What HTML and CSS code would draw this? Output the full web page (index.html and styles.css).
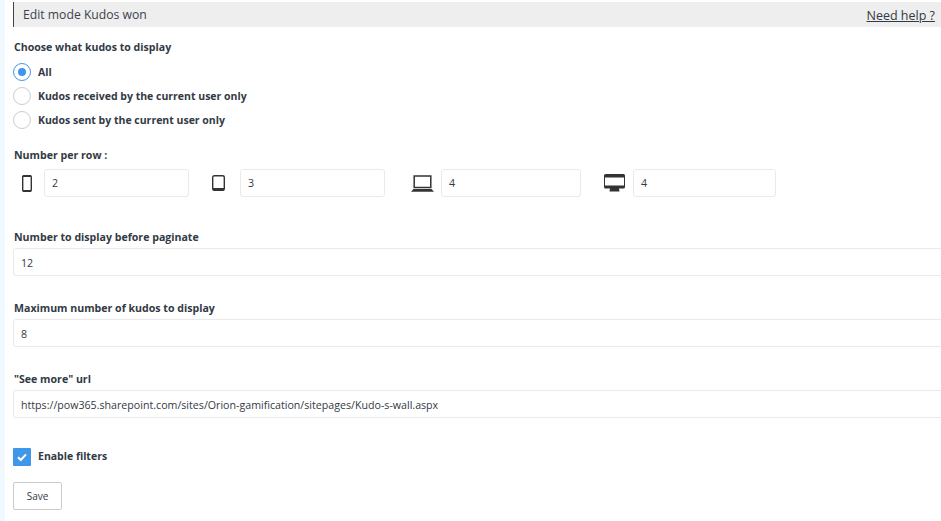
FILE: index.html
```html
<!DOCTYPE html>
<html lang="en">
<head>
<meta charset="utf-8">
<title>Edit mode Kudos won</title>
<link rel="stylesheet" href="styles.css">
</head>
<body>
<main class="panel">
  <header class="head">
    <span class="head-title">Edit mode Kudos won</span>
    <a class="help" href="#">Need help ?</a>
  </header>

  <div class="label first">Choose what kudos to display</div>
  <div class="radios">
    <div class="radio-row"><span class="radio on"></span><span class="opt">All</span></div>
    <div class="radio-row"><span class="radio"></span><span class="opt">Kudos received by the current user only</span></div>
    <div class="radio-row"><span class="radio"></span><span class="opt">Kudos sent by the current user only</span></div>
  </div>

  <div class="label per-row">Number per row :</div>
  <div class="devices">
    <span class="ico i1">
      <svg width="10" height="17" viewBox="0 0 10 17"><rect x=".7" y=".7" width="8.600" height="15.600" rx="1.200" fill="none" stroke="#333" stroke-width="1.400"/><path d="M1 0h8v2H1zM1 15h8v2H1z" fill="#333"/></svg>
    </span>
    <div class="field f1">2</div>
    <span class="ico i2">
      <svg width="13" height="16" viewBox="0 0 13 16"><rect x=".7" y=".7" width="11.600" height="14.600" rx="1.500" fill="none" stroke="#333" stroke-width="1.400"/><path d="M1 13h11v2.500H1z" fill="#333"/></svg>
    </span>
    <div class="field f2">3</div>
    <span class="ico i3">
      <svg width="23" height="17" viewBox="0 0 23 17"><rect x="3.200" y="1" width="16.600" height="11.500" fill="none" stroke="#333" stroke-width="1.500"/><path d="M2.500 14h18l2.500 2.800H0z" fill="#333"/></svg>
    </span>
    <div class="field f3">4</div>
    <span class="ico i4">
      <svg width="21" height="18" viewBox="0 0 21 18"><path d="M1.500 0h18A1.500 1.500 0 0 1 21 1.500v11.500a1.500 1.500 0 0 1-1.500 1.500H15l.5 3h-10l.5-3H1.500A1.500 1.500 0 0 1 0 13v-11.500A1.500 1.500 0 0 1 1.500 0zM1 3.500v8h19v-8z" fill="#333" fill-rule="evenodd"/></svg>
    </span>
    <div class="field f4">4</div>
  </div>

  <div class="label s1">Number to display before paginate</div>
  <div class="field wide">12</div>

  <div class="label s2">Maximum number of kudos to display</div>
  <div class="field wide">8</div>

  <div class="label s2">"See more" url</div>
  <div class="field wide">https://pow365.sharepoint.com/sites/Orion-gamification/sitepages/Kudo-s-wall.aspx</div>

  <div class="check-row">
    <span class="check">
      <svg width="18" height="18" viewBox="0 0 18 18"><path d="M5 9.300l2.800 2.700L13 6.300" fill="none" stroke="#fff" stroke-width="2"/></svg>
    </span>
    <span class="opt opt-check">Enable filters</span>
  </div>

  <button class="save" type="button">Save</button>
</main>
</body>
</html>
```
FILE: styles.css
```css
* { box-sizing: border-box; }
html, body { margin: 0; height: 100%; overflow: hidden; }
body {
  background: #fff;
  font-family: "Open Sans", "Noto Sans", sans-serif;
  color: #323a45;
  font-size: 11px;
  border-left: 5px solid #f0f9ff;
}
.panel { padding: 2px 0 0 8px; width: 936px; }
.head {
  height: 25px;
  background: #eee;
  border-left: 1px solid #444;
  display: flex;
  align-items: center;
  justify-content: space-between;
  padding: 0 6px 0 9px;
}
.head-title { font-size: 12.200px; color: #3b424d; }
.help { font-size: 12.500px; color: #323a45; text-decoration: underline; margin-top: 2px; }
.label { font-weight: 700; font-size: 10.600px; line-height: 14px; color: #323a45; padding-left: 1px; }
.first { margin-top: 13px; }
.radios { margin-top: 6px; }
.radio-row { display: flex; align-items: center; height: 24px; gap: 7px; }
.radio {
  width: 18px; height: 18px; border-radius: 50%;
  border: 1px solid #ccc; background: #fff;
  display: flex; align-items: center; justify-content: center;
}
.radio.on { border-color: #3f97e8; }
.radio.on::after { content: ""; width: 8px; height: 8px; border-radius: 50%; background: #3f97e8; }
.opt { font-weight: 700; font-size: 10.500px; color: #323a45; }
.opt-check { position: relative; top: -1px; }
.per-row { margin-top: 16px; }
.devices { display: flex; align-items: center; margin-top: 7px; }
.ico { flex: none; display: flex; justify-content: flex-end; align-items: center; }
.ico svg { display: block; }
.i1 { width: 31px; padding-right: 12px; }
.i2 { width: 51px; padding-right: 15px; }
.i3 { width: 56px; padding-right: 7px; }
.i4 { width: 52px; padding-right: 8px; }
.f1, .f2 { width: 145px; }
.f3 { width: 140px; }
.f4 { width: 143px; }
.field {
  height: 28px;
  flex: none;
  border: 1px solid #eaeaea;
  border-radius: 3px;
  background: #fff;
  display: flex;
  align-items: center;
  padding-left: 7px;
  font-size: 10.650px;
  color: #323a45;
}
.wide { width: 940px; padding-top: 2px; }
.s1 { margin-top: 33px; margin-bottom: 4px; }
.s2 { margin-top: 25px; margin-bottom: 4px; }
.check-row { display: flex; align-items: center; gap: 7px; margin-top: 30px; height: 18px; }
.check { width: 18px; height: 18px; border-radius: 1px; background: #3f97e8; display: block; }
.check svg { display: block; }
.save {
  display: block;
  margin-top: 16px;
  width: 49px; height: 28px;
  background: #fff;
  border: 1px solid #ccc;
  border-radius: 2px;
  font: 10px "Open Sans", "Noto Sans", sans-serif;
  color: #323a45;
  padding: 0;
}
```
